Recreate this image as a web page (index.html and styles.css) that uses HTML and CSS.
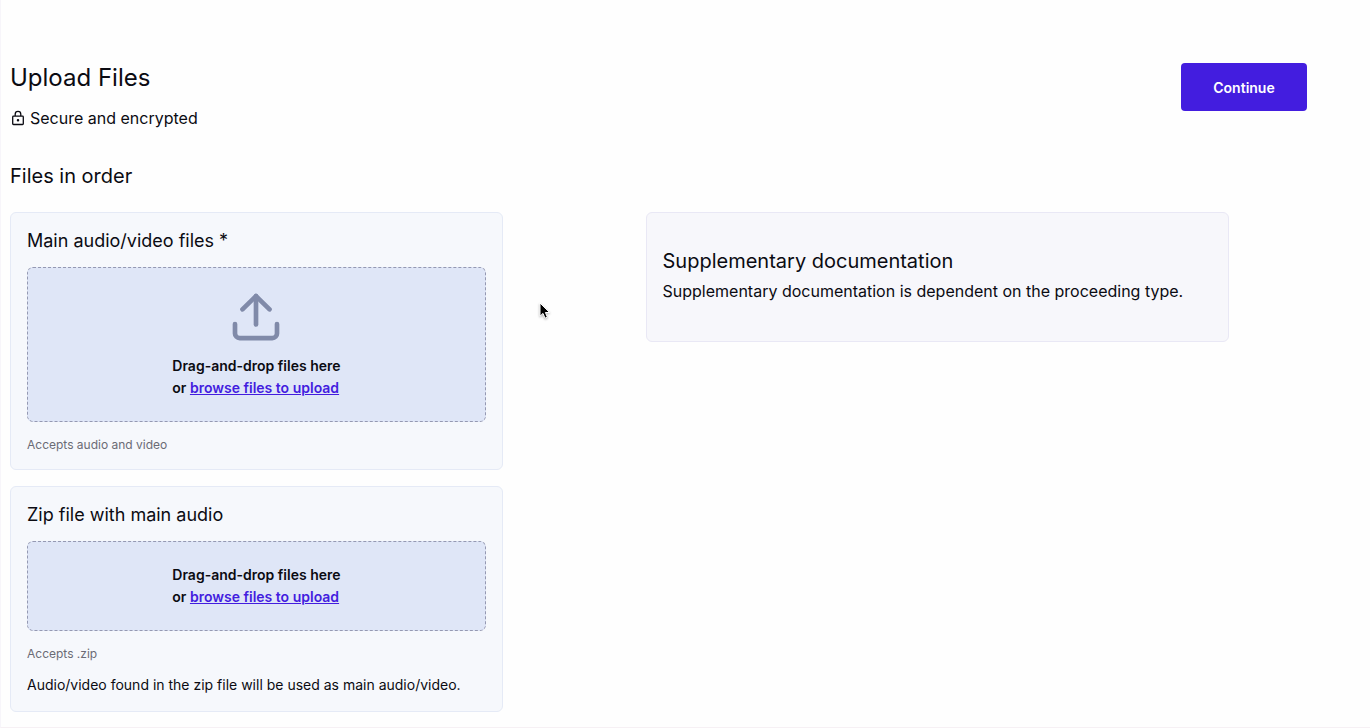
FILE: index.html
```html
<!DOCTYPE html>
<html lang="en">
<head>
    <meta charset="UTF-8">
    <meta name="viewport" content="width=device-width, initial-scale=1.0">
    <title>Upload Files</title>
    <link rel="stylesheet" href="styles.css">
</head>
<body>
    <main class="page">
        <header class="page-header">
            <div>
                <h1>Upload Files</h1>
                <p class="secure">
                    <svg class="lock-icon" viewBox="0 0 16 16" aria-hidden="true">
                        <rect x="2.7" y="6.2" width="10.6" height="8.3" rx="0.8"/>
                        <path d="M5.2 6V4.2a2.8 2.8 0 0 1 5.6 0V6"/>
                        <circle cx="8" cy="10.3" r="0.6"/>
                    </svg>
                    Secure and encrypted
                </p>
            </div>
            <button class="continue-button" type="button">Continue</button>
        </header>

        <h2>Files in order</h2>

        <div class="columns">
            <div class="uploads">
                <section class="card">
                    <h3>Main audio/video files *</h3>
                    <div class="dropzone">
                        <svg class="upload-icon" viewBox="0 0 24 24" aria-hidden="true">
                            <path d="M21 14.6v4a2 2 0 0 1-2 2H5a2 2 0 0 1-2-2v-4"/>
                            <path d="M17.8 8.3L12 2.6 6.2 8.3"/>
                            <path d="M12 2.6v12.2"/>
                        </svg>
                        <p>Drag-and-drop files here<br>or <a href="#">browse files to upload</a></p>
                    </div>
                    <p class="accepts">Accepts audio and video</p>
                </section>

                <section class="card">
                    <h3>Zip file with main audio</h3>
                    <div class="dropzone">
                        <p>Drag-and-drop files here<br>or <a href="#">browse files to upload</a></p>
                    </div>
                    <p class="accepts">Accepts .zip</p>
                    <p class="note">Audio/video found in the zip file will be used as main audio/video.</p>
                </section>
            </div>

            <section class="card supplementary">
                <h3>Supplementary documentation</h3>
                <p>Supplementary documentation is dependent on the proceeding type.</p>
            </section>
        </div>
    </main>

    <svg class="cursor" viewBox="0 0 12 18" aria-hidden="true">
        <path d="M1 1v13.2l3-2.8 2 4.8 2.4-1-2-4.7h4.2z"/>
    </svg>
</body>
</html>
```

FILE: styles.css
```css
* {
    box-sizing: border-box;
}
body {
    font-family: Inter, sans-serif;
    font-size: 16px;
    line-height: 24px;
    color: #0b0b12;
    background-color: #fefefe;
    margin: 0;
    min-height: 100vh;
    border-left: 1px solid #f7f5fa;
    border-bottom: 1px solid #f6f0f4;
    position: relative;
}
h1, h2, h3, p {
    margin: 0;
    font-weight: 400;
}
.page {
    padding: 62px 63px 15px 9px;
}
.page-header {
    display: flex;
    justify-content: space-between;
    align-items: flex-start;
}
h1 {
    font-size: 24px;
    line-height: 32px;
}
.secure {
    display: flex;
    align-items: center;
    gap: 4px;
    margin-top: 12px;
}
.lock-icon {
    width: 16px;
    height: 16px;
    fill: none;
    stroke: #0b0b12;
    stroke-width: 1.3;
}
.continue-button {
    width: 126px;
    height: 48px;
    margin-top: 1px;
    border: none;
    border-radius: 4px;
    background-color: #431ddf;
    color: #fff;
    font-family: inherit;
    font-size: 14px;
    font-weight: 600;
    cursor: pointer;
}
h2 {
    font-size: 20px;
    line-height: 28px;
    margin-top: 32px;
}
.columns {
    display: grid;
    grid-template-columns: 38% 45%;
    column-gap: 11%;
    align-items: start;
    margin-top: 22px;
}
.uploads {
    display: grid;
    gap: 16px;
}
.card {
    padding: 16px;
    border: 1px solid #e5eaf6;
    border-radius: 6px;
    background-color: #f6f8fc;
}
.card h3 {
    font-size: 18px;
}
.dropzone {
    display: flex;
    flex-direction: column;
    align-items: center;
    gap: 9px;
    margin-top: 14px;
    padding: 22px;
    border: 1px dashed #9599b2;
    border-radius: 6px;
    background-color: #dfe6f7;
    font-size: 14px;
    line-height: 22px;
}
.dropzone p {
    font-weight: 600;
}
.dropzone a {
    color: #431ddf;
}
.upload-icon {
    width: 56px;
    height: 56px;
    fill: none;
    stroke: #808aa9;
    stroke-width: 2;
    stroke-linecap: round;
    stroke-linejoin: round;
}
.accepts {
    margin-top: 15px;
    font-size: 12px;
    line-height: 16px;
    color: #6b6b75;
}
.note {
    margin-top: 13px;
    font-size: 14px;
    line-height: 20px;
}
.supplementary {
    padding: 32px 16px 36px;
    border-color: #e9e8f5;
    background-color: #f7f7fb;
}
.supplementary h3 {
    font-size: 20px;
    line-height: 32px;
}
.supplementary p {
    line-height: 28px;
}
.cursor {
    position: absolute;
    left: 538px;
    top: 302px;
    width: 12px;
    height: 18px;
    fill: #000;
    stroke: #fff;
    stroke-width: 1;
    filter: drop-shadow(0 1px 1px rgba(0, 0, 0, 0.3));
    pointer-events: none;
}
```
